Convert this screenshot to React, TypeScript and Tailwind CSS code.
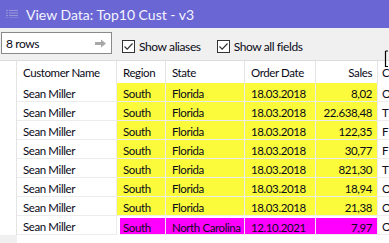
const rows = [
  { sales: '8,02', next: 'O', tone: 'y' },
  { sales: '22.638,48', next: 'T', tone: 'y' },
  { sales: '122,35', next: 'F', tone: 'y' },
  { sales: '30,77', next: 'F', tone: 'y' },
  { sales: '821,30', next: 'T', tone: 'y' },
  { sales: '18,94', next: 'O', tone: 'y' },
  { sales: '21,38', next: 'O', tone: 'y' },
  { sales: '7,97', next: 'O', tone: 'm' },
]

function Check() {
  return (
    <div className="flex h-[13px] w-[13px] items-center justify-center border border-[#333] bg-white">
      <svg width="11" height="11" viewBox="0 0 11 11">
        <path d="M1.5 5.5 L4.2 8.2 L9.5 2.5" fill="none" stroke="#333" strokeWidth="1.2" />
      </svg>
    </div>
  )
}

const cell =
  'flex h-[19px] items-center overflow-hidden whitespace-nowrap border-r border-b border-[#ececec] px-[6px] pt-[3px]'

export default function App() {
  return (
    <div
      className="relative h-[243px] w-[389px] overflow-hidden bg-[#f0f0f0] text-[11.5px] tracking-[-0.4px] text-[#0a0a18]"
      style={{ fontFamily: 'Lato, "Noto Sans", sans-serif' }}
    >
      <div className="flex h-[28px] items-center bg-[#6a66d4] pl-[6px] text-[14px] tracking-normal text-[#f4f4ff]">
        <svg width="12" height="8" viewBox="0 0 12 8" className="mr-[8px]">
          {[0, 2.5, 5, 7.5].map((y) => (
            <g key={y} fill="#9896d8">
              <rect x="0" y={y} width="2" height="1" />
              <rect x="3" y={y} width="9" height="1" />
            </g>
          ))}
        </svg>
        View Data: Top10 Cust - v3
      </div>

      <div className="flex h-[32px] items-start whitespace-nowrap pt-[4px] text-[12px]">
        <div className="ml-[1px] flex h-[22px] w-[111px] items-center justify-between border border-[#8a8a8a] bg-white pl-[4px] pr-[4px] pt-[1px]">
          <span>8 rows</span>
          <svg width="12" height="9" viewBox="0 0 12 9">
            <path d="M0 3 H6 V0.5 L11 4.5 L6 8.5 V6 H0 Z" fill="#a8a8a8" />
          </svg>
        </div>
        <label className="ml-[10px] mt-[5px] flex items-center gap-[4px]">
          <Check />
          <span className="pt-[1px]">Show aliases</span>
        </label>
        <label className="ml-[16px] mt-[5px] flex items-center gap-[4px]">
          <Check />
          <span className="pt-[1px]">Show all fields</span>
        </label>
      </div>

      <div className="border-t border-[#dcdcdc] bg-white">
        <div className="grid grid-cols-[17px_100px_49px_79px_71px_62px_11px]">
          <div className="h-[22px] border-r border-[#e4e4e4]" />
          {['Customer Name', 'Region', 'State', 'Order Date'].map((h) => (
            <div
              key={h}
              className="flex h-[22px] items-center whitespace-nowrap border-r border-[#e4e4e4] px-[6px] pt-[2px]"
            >
              {h}
            </div>
          ))}
          <div className="flex h-[22px] items-center justify-end border-r border-[#e4e4e4] px-[5px] pt-[2px]">
            Sales
          </div>
          <div className="flex h-[22px] items-center overflow-hidden whitespace-nowrap px-[4px] pt-[2px]">
            Category
          </div>

          {rows.map((r, i) => {
            const mag = r.tone === 'm'
            const bg = mag ? 'bg-[#ff00ff] border-t-2 border-t-white' : 'bg-[#fbfb3c]'
            return (
              <div key={i} className="contents">
                <div className="h-[19px] border-r border-[#e4e4e4] bg-white" />
                <div className={`${cell} bg-white`}>Sean Miller</div>
                <div className={`${cell} ${bg} ${mag ? 'ml-[3px] pl-[3px]' : ''}`}>South</div>
                <div className={`${cell} ${bg}`}>{mag ? 'North Carolina' : 'Florida'}</div>
                <div className={`${cell} ${bg}`}>{mag ? '12.10.2021' : '18.03.2018'}</div>
                <div className={`${cell} ${bg} justify-end pr-[5px]`}>{r.sales}</div>
                <div className="flex h-[19px] items-center overflow-hidden border-b border-[#ececec] bg-white px-[4px] pt-[3px]">
                  {r.next}
                </div>
              </div>
            )
          })}
          <div className="h-[8px] bg-[#f0f0f0]" />
        </div>
      </div>

      <svg width="6" height="18" viewBox="0 0 6 18" className="absolute left-[384px] top-[50px]">
        <path d="M1.5 1 V16.5 H4 M1.5 1 H4" fill="none" stroke="#000" strokeWidth="1.2" />
      </svg>
    </div>
  )
}
